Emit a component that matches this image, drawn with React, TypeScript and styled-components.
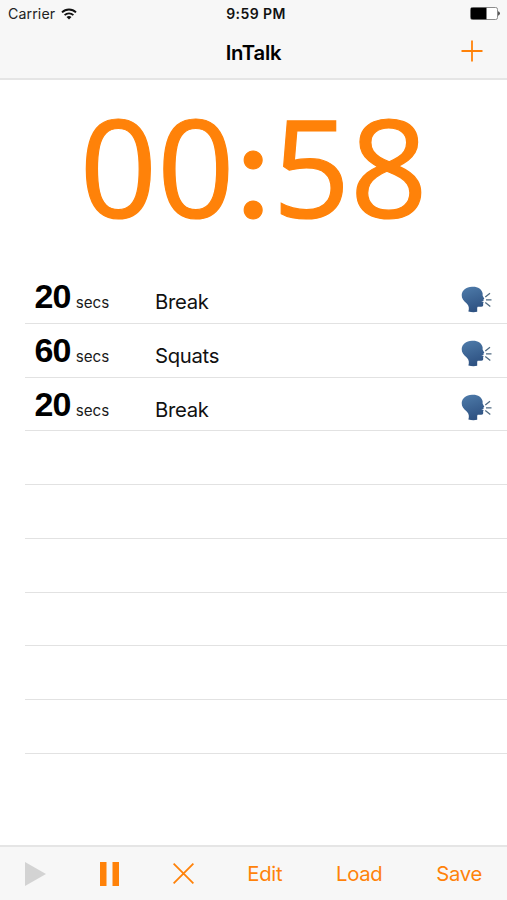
import React from "react";
import styled, { createGlobalStyle } from "styled-components";

const ORANGE = "#ff8209";

const GlobalStyle = createGlobalStyle`
  * { box-sizing: border-box; }
  body { margin: 0; background: #fff; }
`;

const Screen = styled.div`
  width: 507px;
  height: 900px;
  display: flex;
  flex-direction: column;
  overflow: hidden;
  background: #fff;
  color: #000;
  font-family: Inter, "Liberation Sans", sans-serif;
`;

const Header = styled.header`
  height: 80px;
  flex: none;
  background: #f7f7f7;
  border-bottom: 2px solid #e5e5e5;
`;

const StatusBar = styled.div`
  height: 27px;
  display: grid;
  grid-template-columns: 1fr auto 1fr;
  align-items: center;
  padding: 0 7px 0 8px;
`;

const Carrier = styled.div`
  display: flex;
  align-items: center;
  gap: 6px;
  font-size: 14.2px;
  letter-spacing: 0.1px;
  color: #222;
`;

const Clock = styled.div`
  padding-left: 4px;
  font-size: 14px;
  font-weight: 600;
  letter-spacing: 0.4px;
  color: #111;
`;

const BatterySlot = styled.div`
  display: flex;
  justify-content: flex-end;
`;

const NavBar = styled.div`
  height: 50px;
  display: grid;
  grid-template-columns: 1fr auto 1fr;
  align-items: center;
  padding: 0 24px;
`;

const Title = styled.h1`
  grid-column: 2;
  margin: 0;
  font-size: 20.3px;
  font-weight: 600;
  letter-spacing: -0.25px;
`;

const AddButton = styled.button`
  justify-self: end;
  display: flex;
  padding: 0;
  border: 0;
  margin-top: -3px;
  background: none;
`;

const Timer = styled.div`
  height: 190px;
  flex: none;
  display: flex;
  justify-content: center;
  font-family: "Open Sans", "Noto Sans", sans-serif;
  font-size: 136px;
  line-height: 171px;
  font-weight: 500;
  letter-spacing: -0.2px;
  -webkit-text-stroke: 1.2px ${ORANGE};
  color: ${ORANGE};
`;

const Separator = styled.span`
  width: 37px;
  margin-right: 1px;
  text-align: center;
  font-family: Lato, sans-serif;
`;

const List = styled.div`
  flex: 1;
  min-height: 0;
  padding-left: 25px;
`;

const Row = styled.div`
  height: 53.75px;
  display: flex;
  align-items: baseline;
  border-bottom: 1px solid #e2e2e2;
  padding: 8px 15px 0 9.5px;
`;

const Duration = styled.div`
  width: 120.5px;
  display: flex;
  align-items: baseline;
  gap: 5px;
`;

const Amount = styled.span`
  font-family: "Liberation Sans", Arial, sans-serif;
  font-size: 34px;
  line-height: 36px;
  font-weight: 700;
  letter-spacing: -0.8px;
`;

const Unit = styled.span`
  font-size: 15.2px;
  color: #1a1a1a;
`;

const Label = styled.div`
  flex: 1;
  position: relative;
  top: 1px;
  font-size: 20.3px;
  letter-spacing: -0.3px;
  color: #111;
`;

const Voice = styled.div`
  display: flex;
  align-self: flex-start;
  margin-top: 8px;
`;

const Toolbar = styled.footer`
  height: 55px;
  flex: none;
  display: flex;
  align-items: center;
  justify-content: space-between;
  padding: 0 25px;
  background: #f7f7f7;
  border-top: 2px solid #e5e5e5;
`;

const ToolButton = styled.button`
  display: flex;
  padding: 0;
  border: 0;
  background: none;
  font-family: inherit;
  font-size: 20.3px;
  line-height: 24px;
  letter-spacing: -0.3px;
  color: ${ORANGE};
`;

const WifiIcon = () => (
  <svg width="16" height="12" viewBox="0 0 16 12" fill="none" stroke="#111">
    <path d="M1 4.4a10 10 0 0 1 14 0" strokeWidth="1.9" />
    <path d="M3.6 7.1a6.3 6.3 0 0 1 8.8 0" strokeWidth="1.8" />
    <path d="M8 11.6 5.5 9.1a3.6 3.6 0 0 1 5 0Z" fill="#111" stroke="none" />
  </svg>
);

const BatteryIcon = () => (
  <svg width="30" height="13" viewBox="0 0 30 13">
    <rect x="0.5" y="0.5" width="27" height="12" rx="1.8" fill="#fff" stroke="#8c8c8c" />
    <path d="M2 .8h14.5v11.4H2A1.3 1.3 0 0 1 .8 11V2A1.3 1.3 0 0 1 2 .8Z" fill="#000" />
    <path d="M28.2 4.3q1.6.6 1.6 2.2t-1.6 2.2Z" fill="#333" />
  </svg>
);

const SpeakingHead = () => (
  <svg width="31" height="27" viewBox="0 0 31 27">
    <defs>
      <linearGradient id="head" x1="0" y1="0" x2="0.3" y2="1">
        <stop offset="0" stopColor="#4f7cab" />
        <stop offset="1" stopColor="#2f5383" />
      </linearGradient>
    </defs>
    <path
      d="M11 .7C16.5.3 21 3 21.6 7.3c.2 1.1-.2 1.7.2 2.6l1.4 2.7c.2.5-.1.8-.8 1l.2 1.3-2.3.5 2.3.6-.3 1c-.3.5-.2.8-.1 1.6.2 1.7-.7 2.3-2.2 2.2l-2.7-.1c-.9 0-1.1.6-1.1 1.5v3.6Q12 26.8 7.4 25.5c.9-3.2.7-5.4-1.7-7.9C2.5 15 .6 12.5.7 9.1.9 4.2 5 1 11 .7Z"
      fill="url(#head)"
    />
    <path d="m24.3 10.9 4.7-3.7M25 13.8h5.5M24.3 16.5l5 3.9" stroke="#506b82" strokeWidth="1.3" fill="none" />
  </svg>
);

const intervals = [
  { seconds: 20, name: "Break" },
  { seconds: 60, name: "Squats" },
  { seconds: 20, name: "Break" },
];
const EMPTY_ROWS = 6;

export default function App() {
  return (
    <Screen>
      <GlobalStyle />
      <Header>
        <StatusBar>
          <Carrier>
            Carrier <WifiIcon />
          </Carrier>
          <Clock>9:59 PM</Clock>
          <BatterySlot>
            <BatteryIcon />
          </BatterySlot>
        </StatusBar>
        <NavBar>
          <Title>InTalk</Title>
          <AddButton aria-label="Add">
            <svg width="22" height="22" viewBox="0 0 22 22" stroke={ORANGE} strokeWidth="1.8">
              <path d="M11 .5v21M.5 11h21" />
            </svg>
          </AddButton>
        </NavBar>
      </Header>
      <Timer>
        00<Separator>:</Separator>58
      </Timer>
      <List>
        {intervals.map((item, i) => (
          <Row key={i}>
            <Duration>
              <Amount>{item.seconds}</Amount>
              <Unit>secs</Unit>
            </Duration>
            <Label>{item.name}</Label>
            <Voice>
              <SpeakingHead />
            </Voice>
          </Row>
        ))}
        {Array.from({ length: EMPTY_ROWS }, (_, i) => (
          <Row key={`empty-${i}`} />
        ))}
      </List>
      <Toolbar>
        <ToolButton aria-label="Play">
          <svg width="21" height="24" viewBox="0 0 21 24">
            <path d="M0 0v24l21-12Z" fill="#d3d3d3" />
          </svg>
        </ToolButton>
        <ToolButton aria-label="Pause">
          <svg width="19" height="24" viewBox="0 0 19 24" fill={ORANGE}>
            <path d="M0 0h6.5v24H0ZM12.5 0H19v24h-6.5Z" />
          </svg>
        </ToolButton>
        <ToolButton aria-label="Stop">
          <svg width="21" height="21" viewBox="0 0 21 21" stroke={ORANGE} strokeWidth="1.8">
            <path d="m.6.6 19.8 19.8M20.4.6.6 20.4" />
          </svg>
        </ToolButton>
        <ToolButton>Edit</ToolButton>
        <ToolButton>Load</ToolButton>
        <ToolButton>Save</ToolButton>
      </Toolbar>
    </Screen>
  );
}
